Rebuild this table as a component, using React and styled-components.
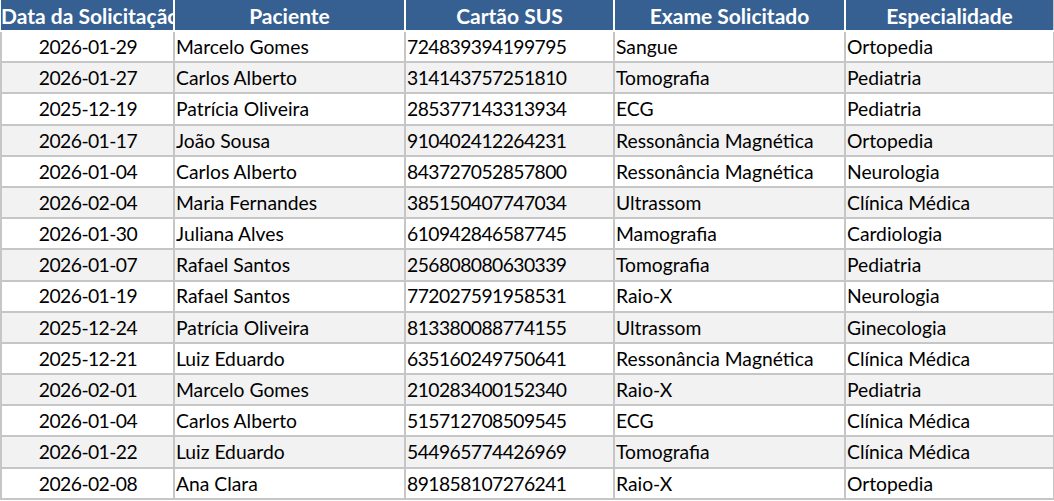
import React from 'react'
import styled, { createGlobalStyle } from 'styled-components';

const GlobalStyle = createGlobalStyle`
    html, body {
        margin: 0;
        padding: 0;
        background: #ffffff;
    }
    body {
        font-family: Lato, "Liberation Sans", sans-serif;
    }
`;

const Sheet = styled.table`
    border-collapse: collapse;
    table-layout: fixed;
    width: 1053px;
    color: #000;
    font-size: 19.3px;
`;

const HeadCell = styled.th`
    background: #366092;
    color: #ffffff;
    font-weight: 700;
    font-size: 21px;
    height: 31px;
    padding: 0;
    text-align: ${props => props.first ? 'left' : 'center'};
    white-space: nowrap;
    overflow: hidden;
    border: 2px solid #ffffff;
    border-top: 0;
    border-left-width: ${props => props.first ? '0' : '2px'};
    border-right-color: ${props => props.last ? '#c6c6c6' : '#ffffff'};
    box-sizing: border-box;
`;

const Row = styled.tr`
    background: ${props => props.shaded ? '#f2f2f2' : '#ffffff'};
`;

const Cell = styled.td`
    height: 31.2px;
    padding: 0 0 0 1px;
    border: 2px solid #c6c6c6;
    box-sizing: border-box;
    white-space: nowrap;
    overflow: hidden;
    text-align: ${props => props.center ? 'center' : 'left'};
    letter-spacing: ${props => props.numeric ? '-0.55px' : '0'};
    line-height: 1;
`;

const columns = [
    { title: 'Data da Solicitação', width: 173 },
    { title: 'Paciente', width: 231 },
    { title: 'Cartão SUS', width: 209 },
    { title: 'Exame Solicitado', width: 231 },
    { title: 'Especialidade', width: 209 },
];

const rows = [
    ['2026-01-29', 'Marcelo Gomes', '724839394199795', 'Sangue', 'Ortopedia'],
    ['2026-01-27', 'Carlos Alberto', '314143757251810', 'Tomografia', 'Pediatria'],
    ['2025-12-19', 'Patrícia Oliveira', '285377143313934', 'ECG', 'Pediatria'],
    ['2026-01-17', 'João Sousa', '910402412264231', 'Ressonância Magnética', 'Ortopedia'],
    ['2026-01-04', 'Carlos Alberto', '843727052857800', 'Ressonância Magnética', 'Neurologia'],
    ['2026-02-04', 'Maria Fernandes', '385150407747034', 'Ultrassom', 'Clínica Médica'],
    ['2026-01-30', 'Juliana Alves', '610942846587745', 'Mamografia', 'Cardiologia'],
    ['2026-01-07', 'Rafael Santos', '256808080630339', 'Tomografia', 'Pediatria'],
    ['2026-01-19', 'Rafael Santos', '772027591958531', 'Raio-X', 'Neurologia'],
    ['2025-12-24', 'Patrícia Oliveira', '813380088774155', 'Ultrassom', 'Ginecologia'],
    ['2025-12-21', 'Luiz Eduardo', '635160249750641', 'Ressonância Magnética', 'Clínica Médica'],
    ['2026-02-01', 'Marcelo Gomes', '210283400152340', 'Raio-X', 'Pediatria'],
    ['2026-01-04', 'Carlos Alberto', '515712708509545', 'ECG', 'Clínica Médica'],
    ['2026-01-22', 'Luiz Eduardo', '544965774426969', 'Tomografia', 'Clínica Médica'],
    ['2026-02-08', 'Ana Clara', '891858107276241', 'Raio-X', 'Ortopedia'],
];

function App() {
    return (
        <>
            <GlobalStyle />
            <Sheet>
                <colgroup>
                    {columns.map(c => <col key={c.title} style={{ width: c.width }} />)}
                </colgroup>
                <thead>
                    <tr>
                        {columns.map((c, i) => (
                            <HeadCell key={c.title} first={i === 0} last={i === columns.length - 1}>
                                {c.title}
                            </HeadCell>
                        ))}
                    </tr>
                </thead>
                <tbody>
                    {rows.map((r, i) => (
                        <Row key={i} shaded={i % 2 === 1}>
                            {r.map((v, j) => (
                                <Cell key={j} center={j === 0} numeric={j === 0 || j === 2}>{v}</Cell>
                            ))}
                        </Row>
                    ))}
                </tbody>
            </Sheet>
        </>
    )
}

export default App
